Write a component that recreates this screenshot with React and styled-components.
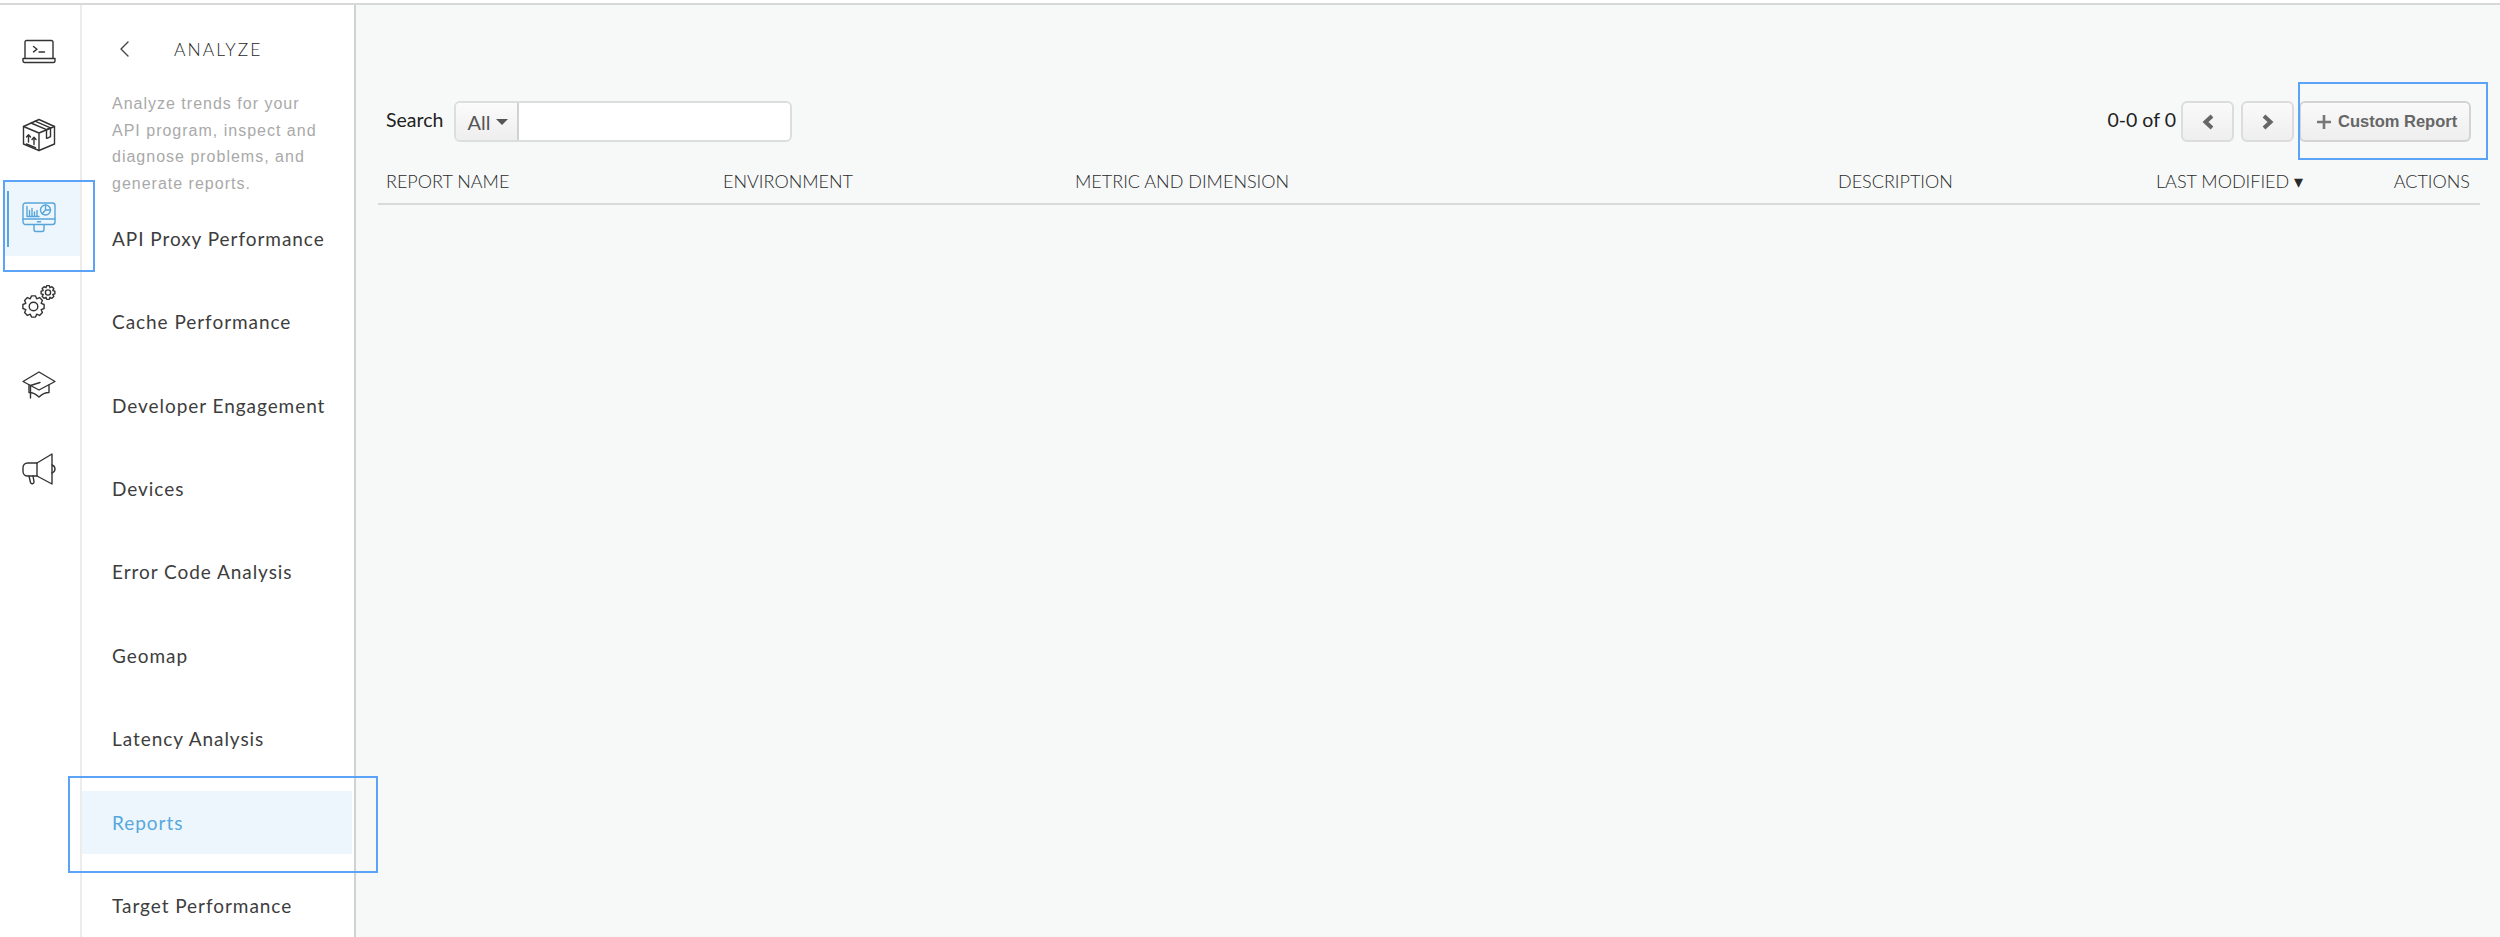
import React from "react";
import styled, { createGlobalStyle } from "styled-components";

const GlobalStyle = createGlobalStyle`
	html, body {
		margin: 0;
		padding: 0;
		height: 100%;
		overflow: hidden;
		background: #fff;
	}
	#root {
		height: 100%;
	}
	* {
		box-sizing: border-box;
	}
`;

const LINE = "#333";
const BLUE = "#57a5da";

const LaptopIcon = () => (
	<LaptopSvg width="34" height="26" viewBox="0 0 34 26" fill="none" stroke={LINE} strokeWidth="1.4" strokeLinejoin="round" strokeLinecap="round">
		<path d="M3 19V3a1.500 1.500 0 0 1 1.500-1.500h25A1.500 1.500 0 0 1 31 3v16" />
		<path d="M1 19.500h32v2.500a1.500 1.500 0 0 1-1.500 1.500h-29A1.500 1.500 0 0 1 1 22z" />
		<path d="M11.500 7.500l3.500 2.700-3.500 2.700M17 13h5.500" />
	</LaptopSvg>
);

const BoxIcon = () => (
	<svg width="34" height="34" viewBox="0 0 34 34" fill="none" stroke={LINE} strokeWidth="1.4" strokeLinejoin="round" strokeLinecap="round">
		<path d="M17 1.500L32.500 8.500V26L17 32.500 1.500 26V8.500z" />
		<path d="M1.500 8.500L17 15v17.500M32.500 8.500L17 15" />
		<path d="M9 5l15.500 6.700v8.500l2-0.500 2-1V9.800L13 3.200" />
		<path d="M24.500 11.700l4-1.900" />
		<path d="M6.500 24v-7M4.500 19l2-2.200 2 2.200M12 26.500v-7M10 21.500l2-2.200 2 2.200M4.500 26l9 3.600" />
	</svg>
);

const MonitorIcon = () => (
	<svg width="34" height="32" viewBox="0 0 34 32" fill="none" stroke={BLUE} strokeWidth="1.4" strokeLinejoin="round" strokeLinecap="round">
		<rect x="1" y="1" width="32" height="21.500" rx="2.500" />
		<path d="M1 17h32" />
		<path d="M15.500 19.700h3" strokeWidth="1.600" />
		<path d="M12 23v4.500a2 2 0 0 0 2 2h6a2 2 0 0 0 2-2V23" />
		<path d="M5 4.500V14.500H17M7.500 14V8.500M10 14V6.500M12.500 14V10M15 14V8.500" />
		<circle cx="23.500" cy="8" r="5" />
		<path d="M23.500 3v5h5M23.500 8l-3.300 3.700" />
	</svg>
);

const gearPath = (cx, cy, ro, ri, teeth) => {
	let d = "";
	const step = (Math.PI * 2) / teeth;
	for (let i = 0; i < teeth; i++) {
		const a = i * step;
		const pts = [
			[ri, a - step * 0.5],
			[ro, a - step * 0.24],
			[ro, a + step * 0.24],
		];
		pts.forEach(([r, t], j) => {
			const x = (cx + r * Math.cos(t)).toFixed(2);
			const y = (cy + r * Math.sin(t)).toFixed(2);
			d += `${i === 0 && j === 0 ? "M" : "L"}${x} ${y}`;
		});
	}
	return d + "Z";
};

const GearsIcon = () => (
	<svg width="34" height="34" viewBox="0 0 34 34" fill="none" stroke={LINE} strokeWidth="1.4" strokeLinejoin="round">
		<path d={gearPath(11.5, 21.5, 10.8, 8.3, 8)} />
		<circle cx="11.500" cy="21.500" r="4.300" />
		<path d={gearPath(26, 7.5, 7, 5.2, 8)} />
		<circle cx="26" cy="7.500" r="2.600" />
	</svg>
);

const CapIcon = () => (
	<svg width="34" height="28" viewBox="0 0 34 28" fill="none" stroke={LINE} strokeWidth="1.4" strokeLinejoin="round" strokeLinecap="round">
		<path d="M17 1L33 10.500 17 19 1 10.500z" />
		<path d="M7 14v7.500c3.500 0 7 1.500 10 4.500 3-3 6.500-4.500 10-4.500V14" />
		<path d="M18 11.500L8.500 14.500V27" />
	</svg>
);

const MegaphoneIcon = () => (
	<svg width="34" height="32" viewBox="0 0 34 32" fill="none" stroke={LINE} strokeWidth="1.4" strokeLinejoin="round" strokeLinecap="round">
		<path d="M5.500 10H15L30 1v30L15 23H5.500A4.500 4.500 0 0 1 1 18.500v-4A4.500 4.500 0 0 1 5.500 10z" />
		<path d="M15 10v13M30 12c2 .8 3 2.200 3 4s-1 3.200-3 4" />
		<path d="M7 23l1.500 6.500a1.800 1.800 0 0 0 3.500-.8L11 23" />
	</svg>
);

const BackIcon = () => (
	<svg width="11" height="16" viewBox="0 0 11 16" fill="none" stroke="#444" strokeWidth="1.400" strokeLinecap="round" strokeLinejoin="round">
		<path d="M9 1L2 8l7 7" />
	</svg>
);

const railItems = [
	{ id: "console", icon: <LaptopIcon /> },
	{ id: "packages", icon: <BoxIcon /> },
	{ id: "analyze", icon: <MonitorIcon />, active: true },
	{ id: "admin", icon: <GearsIcon /> },
	{ id: "learn", icon: <CapIcon /> },
	{ id: "news", icon: <MegaphoneIcon /> },
];

const navItems = [
	"API Proxy Performance",
	"Cache Performance",
	"Developer Engagement",
	"Devices",
	"Error Code Analysis",
	"Geomap",
	"Latency Analysis",
	"Reports",
	"Target Performance",
];

const columns = ["REPORT NAME", "ENVIRONMENT", "METRIC AND DIMENSION", "DESCRIPTION"];

const App = () => {
	return (
		<Page>
			<GlobalStyle />
			<Rail>
				{railItems.map((item) => (
					<RailItem key={item.id} $active={item.active}>
						{item.icon}
					</RailItem>
				))}
			</Rail>
			<SidePanel>
				<PanelHeader>
					<BackIcon />
					<PanelTitle>ANALYZE</PanelTitle>
				</PanelHeader>
				<PanelText>
					Analyze trends for your API program, inspect and diagnose problems, and generate reports.
				</PanelText>
				<NavList>
					{navItems.map((name) => (
						<NavItem key={name} $active={name === "Reports"}>
							{name}
						</NavItem>
					))}
				</NavList>
			</SidePanel>
			<Main>
				<Toolbar>
					<SearchLabel>Search</SearchLabel>
					<SearchGroup>
						<FilterButton>
							All
							<Caret />
						</FilterButton>
						<SearchInput />
					</SearchGroup>
					<Pager>
						<PagerText>0-0 of 0</PagerText>
						<PagerButton aria-label="Previous">
							<svg width="14" height="16" viewBox="0 0 14 16" fill="none" stroke="#666" strokeWidth="4">
								<path d="M11 2L4.500 8l6.500 6" />
							</svg>
						</PagerButton>
						<PagerButton aria-label="Next" $next>
							<svg width="14" height="16" viewBox="0 0 14 16" fill="none" stroke="#666" strokeWidth="4">
								<path d="M3 2l6.500 6L3 14" />
							</svg>
						</PagerButton>
						<ReportButton>
							<svg width="16" height="16" viewBox="0 0 16 16" stroke="#777" strokeWidth="2.600">
								<path d="M8 1v14M1 8h14" />
							</svg>
							Custom Report
						</ReportButton>
					</Pager>
				</Toolbar>
				<TableHead>
					{columns.map((name) => (
						<HeadCell key={name}>{name}</HeadCell>
					))}
					<HeadCell>LAST MODIFIED ▾</HeadCell>
					<HeadCell $right>ACTIONS</HeadCell>
				</TableHead>
			</Main>
			<Highlight $x={3} $y={180} $w={92} $h={92} />
			<Highlight $x={68} $y={776} $w={310} $h={97} />
			<Highlight $x={2298} $y={82} $w={190} $h={78} />
		</Page>
	);
};

const LaptopSvg = styled.svg`
	margin-top: 2px;
`;

const Page = styled.div`
	position: relative;
	display: flex;
	height: 937px;
	overflow: hidden;
	border-top: 2px solid #d8d8d8;
	margin-top: 3px;
	font-family: Lato, "Liberation Sans", sans-serif;
	color: #333;
`;

const Rail = styled.div`
	display: flex;
	flex-direction: column;
	gap: 7.500px;
	flex: 0 0 82px;
	padding: 8px 0 0 3px;
	border-right: 2px solid #ececec;
`;

const RailItem = styled.div`
	position: relative;
	display: flex;
	align-items: center;
	justify-content: center;
	height: 76px;
	flex: none;
	padding-right: 5px;
	background: ${(p) => (p.$active ? "#edf6fc" : "transparent")};

	${(p) =>
		p.$active &&
		`
		&::before {
			content: "";
			position: absolute;
			left: 4px;
			top: 11px;
			bottom: 9px;
			width: 2px;
			background: ${BLUE};
		}
	`}
`;

const SidePanel = styled.div`
	flex: 0 0 274px;
	padding-top: 29px;
	border-right: 2px solid #cfd2d2;
`;

const PanelHeader = styled.div`
	display: flex;
	align-items: center;
	gap: 44px;
	height: 30px;
	padding-left: 37px;
`;

const PanelTitle = styled.div`
	font-size: 17.500px;
	font-weight: 300;
	letter-spacing: 2px;
	color: #1f1f1f;
`;

const PanelText = styled.div`
	margin-top: 27px;
	padding: 0 28px 0 30px;
	font-family: "Liberation Sans", sans-serif;
	font-size: 16px;
	line-height: 26.700px;
	letter-spacing: 1px;
	color: #a9a9a9;
`;

const NavList = styled.div`
	display: flex;
	flex-direction: column;
	gap: 20.400px;
	margin-top: 9px;
	padding-right: 2px;
`;

const NavItem = styled.div`
	display: flex;
	align-items: center;
	height: 63px;
	flex: none;
	padding-left: 30px;
	font-size: 19px;
	letter-spacing: 0.950px;
	color: ${(p) => (p.$active ? "#57a8dc" : "#3d3d3d")};
	background: ${(p) => (p.$active ? "#edf6fc" : "transparent")};
`;

const Main = styled.div`
	flex: 1;
	padding: 96px 20px 0 22px;
	background: #f7f9f9;
`;

const Toolbar = styled.div`
	display: flex;
	align-items: center;
	height: 41px;
	padding: 0 9px 0 8px;
`;

const SearchLabel = styled.div`
	font-size: 19.500px;
	color: #222;
	margin-right: 11px;
	margin-top: -5px;
`;

const SearchGroup = styled.div`
	display: flex;
	width: 338px;
	height: 41px;
	border: 2px solid #dcdddd;
	border-radius: 6px;
	background: #fff;
	overflow: hidden;
`;

const FilterButton = styled.div`
	display: flex;
	align-items: center;
	gap: 6px;
	flex: 0 0 63px;
	padding-left: 11px;
	font-size: 20px;
	color: #555;
	background: linear-gradient(#fbfbfb, #eeeeee);
	border-right: 2px solid #cfd2d2;
`;

const Caret = styled.span`
	width: 0;
	height: 0;
	border-left: 6px solid transparent;
	border-right: 6px solid transparent;
	border-top: 6px solid #555;
`;

const SearchInput = styled.div`
	flex: 1;
	background: #fff;
`;

const Pager = styled.div`
	display: flex;
	align-items: center;
	margin-left: auto;
`;

const PagerText = styled.div`
	font-size: 19.500px;
	color: #222;
	margin-right: 5px;
	margin-top: -5px;
`;

const PagerButton = styled.button`
	display: flex;
	align-items: center;
	justify-content: center;
	width: 53px;
	height: 41px;
	margin-right: ${(p) => (p.$next ? "5px" : "7px")};
	padding: 0;
	border: 2px solid #dcdcdc;
	border-radius: 6px;
	background: linear-gradient(#fafafa, #eeeeee);
`;

const ReportButton = styled.button`
	display: flex;
	align-items: center;
	gap: 6px;
	width: 172px;
	height: 41px;
	padding: 0 0 0 15px;
	border: 2px solid #d3d3d3;
	border-radius: 6px;
	background: linear-gradient(#fafafa, #eeeeee);
	font-family: "Liberation Sans", sans-serif;
	font-size: 16.500px;
	font-weight: 700;
	color: #666;
`;

const TableHead = styled.div`
	display: grid;
	grid-template-columns: 337px 352px 763px 318px 1fr auto;
	align-items: center;
	height: 63px;
	padding: 16px 10px 0 8px;
	border-bottom: 2px solid #d8dada;
`;

const HeadCell = styled.div`
	font-size: 18px;
	font-weight: 300;
	color: #2a2a2a;
	white-space: nowrap;
	text-align: ${(p) => (p.$right ? "right" : "left")};
`;

const Highlight = styled.div.attrs((p) => ({
	style: { left: p.$x, top: p.$y - 5, width: p.$w, height: p.$h },
}))`
	position: absolute;
	border: 2px solid #5ba3f6;
	pointer-events: none;
`;

export default App;
